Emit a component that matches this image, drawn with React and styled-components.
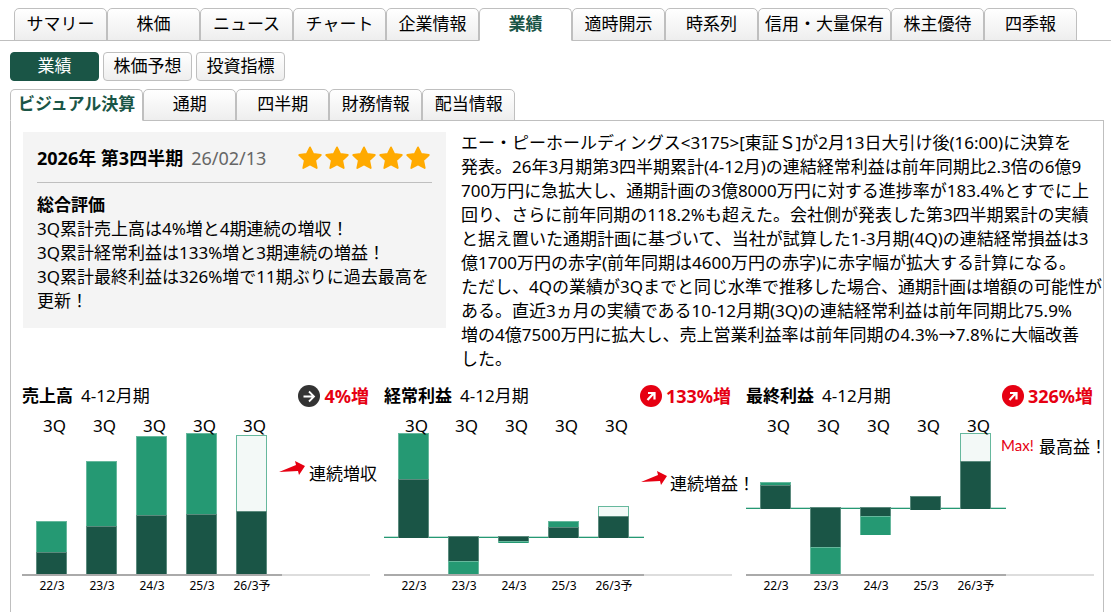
import styled, { createGlobalStyle } from "styled-components";

const GlobalStyle = createGlobalStyle`
  *, *::before, *::after {
    box-sizing: border-box;
  }

  body {
    margin: 0;
    background: #fff;
    color: #000;
    font-family: "Noto Sans", "Noto Sans CJK JP", sans-serif;
    font-size: 17px;
    line-height: 24px;
  }

  h2, p {
    margin: 0;
    font-size: inherit;
  }
`;

const Page = styled.div`
  display: flex;
  flex-direction: column;
  min-height: 100vh;
`;

const TabBar = styled.nav`
  display: flex;
  padding-left: ${(props) => (props.$nested ? "0" : "14px")};
  margin: ${(props) => (props.$nested ? "8px 7px 0 10px" : "8px 0 0")};
  box-shadow: inset 0 -1px #bfbfbf;
`;

const Tab = styled.a`
  display: flex;
  justify-content: center;
  min-width: 93px;
  height: ${(props) => (props.$nested ? "32px" : "33px")};
  padding: ${(props) => (props.$nested ? "2px 7px 0" : "3px 6px 0")};
  border: 1px solid #bfbfbf;
  border-bottom-color: ${(props) => (props.$active ? "#fff" : "#bfbfbf")};
  border-radius: 5px 5px 0 0;
  background: ${(props) =>
    props.$active ? "#fff" : "linear-gradient(#fff, #eee)"};
  color: ${(props) => (props.$active ? "#1a5546" : "#000")};
  font-weight: ${(props) => (props.$active ? 700 : 400)};
  text-decoration: none;
  white-space: nowrap;
`;

const Pills = styled.nav`
  display: flex;
  gap: 4px;
  margin: 11px 10px 0;
`;

const Pill = styled.a`
  display: flex;
  justify-content: center;
  min-width: 89px;
  height: 29px;
  padding: 1px 5px 0;
  border: 1px solid ${(props) => (props.$active ? "#1a5546" : "#bfbfbf")};
  border-radius: 4px;
  background: ${(props) =>
    props.$active ? "#1a5546" : "linear-gradient(#fff, #eee)"};
  color: ${(props) => (props.$active ? "#fff" : "#000")};
  text-decoration: none;
  white-space: nowrap;
`;

const Panel = styled.main`
  flex: 1;
  margin: 0 7px 0 10px;
  padding: 10px 9px 0 11px;
  border: solid #bfbfbf;
  border-width: 0 1px;
`;

const Overview = styled.section`
  display: grid;
  grid-template-columns: minmax(0, 423fr) minmax(0, 633fr);
  gap: 15px;
  align-items: start;
  padding-left: 1px;
`;

const Rating = styled.div`
  margin-top: 1px;
  padding: 14px 14px 15px;
  background: #f4f4f4;
`;

const RatingHead = styled.header`
  display: flex;
  align-items: center;
  gap: 8px;
  margin-bottom: 10px;
  padding: 0 2px 12px 0;
  border-bottom: 1px solid #bfbfbf;
  font-size: 18px;
`;

const Announced = styled.time`
  color: #666;
`;

const Stars = styled.div`
  display: flex;
  gap: 3px;
  margin-left: auto;
`;

const Article = styled.p`
  white-space: nowrap;
`;

const Charts = styled.section`
  display: grid;
  grid-template-columns: repeat(3, 1fr);
  gap: 14px;
  margin-top: 13px;
`;

const ChartHead = styled.header`
  display: flex;
  align-items: center;
  gap: 8px;
  padding-right: 1px;
`;

const Change = styled.strong`
  display: flex;
  align-items: center;
  gap: 4px;
  margin-left: auto;
  color: #e60012;
  font-size: 18px;
`;

const Plot = styled.svg`
  display: block;
  width: 100%;
  height: 190px;
  overflow: visible;
`;

const AxisText = styled.text`
  font-size: 12px;
  text-anchor: middle;
`;

const MaxText = styled.text`
  fill: #e60012;
  font-family: "Lato", sans-serif;
  font-size: 15px;
`;

const mainTabs = [
  "サマリー",
  "株価",
  "ニュース",
  "チャート",
  "企業情報",
  "業績",
  "適時開示",
  "時系列",
  "信用・大量保有",
  "株主優待",
  "四季報",
];

const pills = ["業績", "株価予想", "投資指標"];

const subTabs = ["ビジュアル決算", "通期", "四半期", "財務情報", "配当情報"];

const comments = [
  "3Q累計売上高は4%増と4期連続の増収！",
  "3Q累計経常利益は133%増と3期連続の増益！",
  "3Q累計最終利益は326%増で11期ぶりに過去最高を更新！",
];

const article = [
  "エー・ピーホールディングス<3175>[東証Ｓ]が2月13日大引け後(16:00)に決算を",
  "発表。26年3月期第3四半期累計(4-12月)の連結経常利益は前年同期比2.3倍の6億9",
  "700万円に急拡大し、通期計画の3億8000万円に対する進捗率が183.4%とすでに上",
  "回り、さらに前年同期の118.2%も超えた。会社側が発表した第3四半期累計の実績",
  "と据え置いた通期計画に基づいて、当社が試算した1-3月期(4Q)の連結経常損益は3",
  "億1700万円の赤字(前年同期は4600万円の赤字)に赤字幅が拡大する計算になる。",
  "ただし、4Qの業績が3Qまでと同じ水準で推移した場合、通期計画は増額の可能性が",
  "ある。直近3ヵ月の実績である10-12月期(3Q)の連結経常利益は前年同期比75.9%",
  "増の4億7500万円に拡大し、売上営業利益率は前年同期の4.3%→7.8%に大幅改善",
  "した。",
];

const years = ["22/3", "23/3", "24/3", "25/3", "26/3予"];

// each bar: dark part [top, bottom] and the rest of the year [top, bottom]
const charts = [
  {
    title: "売上高",
    change: "4%増",
    trend: "flat",
    note: { text: "連続増収", x: 287, y: 72 },
    bars: [
      { dark: [144, 167], rest: [113, 144] },
      { dark: [118, 167], rest: [53, 118] },
      { dark: [107, 167], rest: [28, 107] },
      { dark: [106, 167], rest: [25, 106] },
      { dark: [103, 167], rest: [27, 103], forecast: true },
    ],
  },
  {
    title: "経常利益",
    change: "133%増",
    trend: "up",
    zero: 129,
    note: { text: "連続増益！", x: 286, y: 82 },
    bars: [
      { dark: [71, 130], rest: [25, 71] },
      { dark: [128, 153], rest: [153, 167] },
      { dark: [128, 133], rest: [133, 135] },
      { dark: [119, 130], rest: [113, 119] },
      { dark: [108, 130], rest: [98, 108], forecast: true },
    ],
  },
  {
    title: "最終利益",
    change: "326%増",
    trend: "up",
    zero: 100,
    note: { text: "最高益！", x: 293, y: 45, max: true },
    bars: [
      { dark: [77, 101], rest: [74, 77] },
      { dark: [99, 139], rest: [139, 167] },
      { dark: [99, 108], rest: [108, 127] },
      { dark: [88, 102] },
      { dark: [53, 101], rest: [25, 53], forecast: true },
    ],
  },
];

function Star() {
  return (
    <svg width="24" height="24" viewBox="0 0 24 24" aria-hidden="true">
      <path
        d="M12 1.4 15.2 8 22.8 9 17.2 14.3 18.7 22 12 18.4 5.3 22 6.8 14.3 1.2 9 8.8 8Z"
        fill="#ffaa00"
        stroke="#ffaa00"
        strokeWidth="1.8"
        strokeLinejoin="round"
      />
    </svg>
  );
}

function TrendIcon({ trend }) {
  const up = trend === "up";
  return (
    <svg width="22" height="22" viewBox="0 0 22 22" aria-hidden="true">
      <circle cx="11" cy="11" r="11" fill={up ? "#e60012" : "#333"} />
      <path
        d={up ? "M7.5 15 14 8M8 8h6.5v6.5" : "M5.5 11.5h10.5M11 6.5l5 5-5 5"}
        fill="none"
        stroke="#fff"
        strokeWidth={up ? "2.2" : "1.8"}
      />
    </svg>
  );
}

function Segment({ x, range, color, edge }) {
  const [top, bottom] = range;
  return (
    <>
      <rect x={x} y={top} width="31" height={bottom - top} fill={edge} />
      <rect
        x={x + 1}
        y={top + 1}
        width="29"
        height={Math.max(bottom - top - 1, 1)}
        fill={color}
      />
    </>
  );
}

function Chart({ title, change, trend, zero, note, bars }) {
  return (
    <article>
      <ChartHead>
        <h2>{title}</h2>
        <span>4-12月期</span>
        <Change>
          <TrendIcon trend={trend} />
          {change}
        </Change>
      </ChartHead>
      <Plot role="img" aria-label={title}>
        {zero && (
          <>
            <rect y={zero - 1} width="260" height="1" fill="#bfe0d6" />
            <rect y={zero} width="260" height="1" fill="#259973" />
          </>
        )}
        {bars.map((bar, i) => (
          <g key={years[i]}>
            {bar.rest && (
              <Segment
                x={14 + i * 50}
                range={bar.rest}
                color={bar.forecast ? "#f3f9f7" : "#259973"}
                edge="#66b89d"
              />
            )}
            <Segment
              x={14 + i * 50}
              range={bar.dark}
              color="#1a5546"
              edge="#5b8a7d"
            />
            <text x={21 + i * 50} y="24">
              3Q
            </text>
            <AxisText x={30 + i * 50} y="182">
              {years[i]}
            </AxisText>
          </g>
        ))}
        <rect y="166" width="260" height="2" fill="#aaa" />
        <rect x="260" y="166" width="88" height="2" fill="#ddd" />
        {note.max ? (
          <MaxText x="255" y={note.y - 2}>
            Max!
          </MaxText>
        ) : (
          <path
            transform={`translate(257 ${note.y - 19})`}
            d="M0 11 17 4 16 0 26 5 20 14 19 10Z"
            fill="#e60012"
          />
        )}
        <text x={note.x} y={note.y}>
          {note.text}
        </text>
      </Plot>
    </article>
  );
}

function App() {
  return (
    <>
      <GlobalStyle />
      <Page>
        <TabBar>
          {mainTabs.map((label) => (
            <Tab key={label} href="#" $active={label === "業績"}>
              {label}
            </Tab>
          ))}
        </TabBar>
        <Pills>
          {pills.map((label) => (
            <Pill key={label} href="#" $active={label === "業績"}>
              {label}
            </Pill>
          ))}
        </Pills>
        <TabBar $nested>
          {subTabs.map((label) => (
            <Tab key={label} href="#" $nested $active={label === subTabs[0]}>
              {label}
            </Tab>
          ))}
        </TabBar>
        <Panel>
          <Overview>
            <Rating>
              <RatingHead>
                <h2>2026年 第3四半期</h2>
                <Announced>26/02/13</Announced>
                <Stars role="img" aria-label="5">
                  {[1, 2, 3, 4, 5].map((n) => (
                    <Star key={n} />
                  ))}
                </Stars>
              </RatingHead>
              <h2>総合評価</h2>
              {comments.map((comment) => (
                <p key={comment}>{comment}</p>
              ))}
            </Rating>
            <Article>
              {article.map((line) => (
                <span key={line}>
                  {line}
                  <br />
                </span>
              ))}
            </Article>
          </Overview>
          <Charts>
            {charts.map((chart) => (
              <Chart key={chart.title} {...chart} />
            ))}
          </Charts>
        </Panel>
      </Page>
    </>
  );
}

export default App;
